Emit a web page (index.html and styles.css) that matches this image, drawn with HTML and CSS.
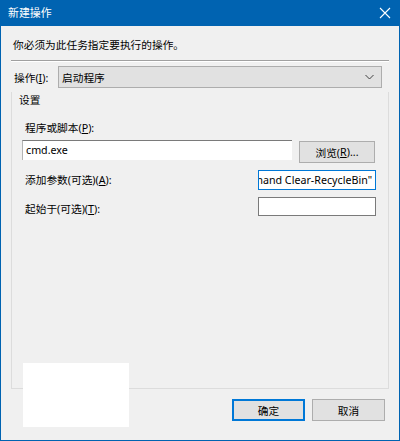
FILE: index.html
```html
<!doctype html>
<html>
<head>
  <meta charset="UTF-8">
  <title>新建操作</title>
  <link rel="stylesheet" href="styles.css">
</head>
<body>
  <div class="window">
    <div class="titlebar">
      <span class="title">新建操作</span>
      <svg class="close" width="12" height="12" viewBox="0 0 12 12">
        <path d="M1 1L11 11M11 1L1 11" stroke="#fff" stroke-width="1.1" fill="none"/>
      </svg>
    </div>
    <div class="content">
      <div class="intro">你必须为此任务指定要执行的操作。</div>
      <div class="sep"></div>
      <div class="action-row">
        <span class="action-label">操作(<u>I</u>):</span>
        <div class="combo">
          <span>启动程序</span>
          <svg class="chev" width="9" height="6" viewBox="0 0 9 6">
            <path d="M0.5 1L4.5 5L8.5 1" stroke="#404040" stroke-width="1" fill="none"/>
          </svg>
        </div>
      </div>
      <div class="group">
        <div class="legend">设置</div>
        <div class="field-label">程序或脚本(<u>P</u>):</div>
        <div class="prog-row">
          <div class="input prog">cmd.exe</div>
          <div class="btn browse">浏览(<u>R</u>)...</div>
        </div>
        <div class="opt-row">
          <span class="opt-label">添加参数(可选)(<u>A</u>):</span>
          <div class="input small focus"><span>/c "PowerShell -Command Clear-RecycleBin"</span></div>
        </div>
        <div class="opt-row second">
          <span class="opt-label low">起始于(可选)(<u>T</u>):</span>
          <div class="input small plain"></div>
        </div>
      </div>
      <div class="footer">
        <div class="btn ok">确定</div>
        <div class="btn">取消</div>
      </div>
    </div>
    <div class="blank"></div>
  </div>
</body>
</html>
```

FILE: styles.css
```css
*{margin:0;
  padding:0;
  box-sizing:border-box;}
body{width:400px;
     height:441px;
     overflow:hidden;
     font-family:"Noto Sans","Noto Sans CJK SC",sans-serif;
     font-size:10.7px;
     color:#000;}
u{text-decoration:underline;
  text-underline-offset:1px;}
.window{position:relative;
        width:400px;
        height:441px;
        background:#f0f0f0;
        border:1px solid #0063b1;
        border-top:none;}
.titlebar{height:26px;
          margin:0 -1px;
          background:#0063b1;
          display:flex;
          align-items:center;
          justify-content:space-between;
          padding:0 9px 0 8px;}
.titlebar .title{color:#fff;
                 font-size:10.9px;
                 line-height:16px;}
.content{padding:11px 10px 0 10px;}
.intro{height:16px;
       line-height:16px;
       margin-left:2px;}
.sep{height:2px;
     margin-top:7px;
     border-top:1px solid #a0a0a0;
     border-bottom:1px solid #fff;}
.action-row{display:flex;
            align-items:center;
            margin-top:4px;
            height:22px;}
.action-label{width:47px;
              padding-left:3px;}
.combo{width:324px;
       height:22px;
       background:#e1e1e1;
       border:1px solid #adadad;
       display:flex;
       align-items:center;
       justify-content:space-between;
       padding:0 7px 0 3px;}
.group{height:297px;
       margin-top:12px;
       border:1px solid #dcdcdc;
       border-top:none;
       padding:0 12px 0 10px;}
.legend{margin:-8px 0 0 -3px;
        height:16px;
        line-height:16px;}
.field-label{margin:12px 0 0 3px;
             height:16px;
             line-height:16px;}
.prog-row{display:flex;
          align-items:flex-start;
          margin-top:4px;
          gap:7px;}
.input{height:20px;
       background:#fff;
       line-height:18px;
       padding:0 3px;
       white-space:nowrap;
       overflow:hidden;}
.prog{width:270px;
      border-top:1px solid #7a7a7a;
      border-left:1px solid #b4b4b4;}
.btn{height:22px;
     background:#e1e1e1;
     border:1px solid #adadad;
     display:flex;
     align-items:center;
     justify-content:center;}
.browse{width:76px;
        margin-top:1px;}
.opt-row{display:flex;
         align-items:center;
         justify-content:space-between;
         margin-top:7px;}
.opt-row.second{margin-top:5px;}
.opt-label{margin-left:3px;
           line-height:16px;}
.opt-label.low{padding-top:6px;}
.small{width:118px;
       display:flex;
       justify-content:flex-end;
       line-height:18px;}
.focus{border:1px solid #0078d7;}
.plain{border:1px solid #7a7a7a;
       height:19px;}
.footer{display:flex;
        justify-content:flex-end;
        gap:7px;
        margin-top:10px;
        padding-right:4px;}
.footer .btn{width:73px;}
.footer .ok{border:2px solid #0078d7;}
.blank{position:absolute;
       left:22px;
       top:363px;
       width:106px;
       height:64px;
       background:#fff;}
```
